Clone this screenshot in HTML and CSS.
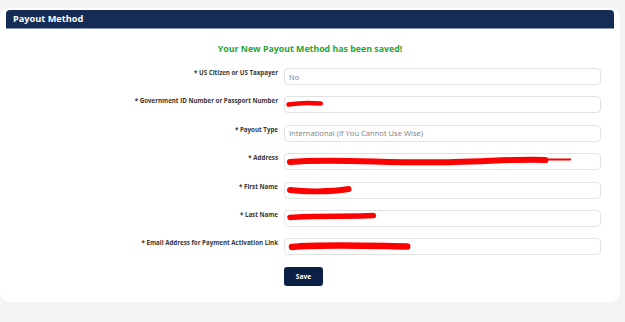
FILE: index.html
```html
<!DOCTYPE html>
<html>
<head>
<meta charset="utf-8">
<link rel="stylesheet" href="styles.css">
</head>
<body>
<div class="card">
  <div class="card-header">Payout Method</div>
  <div class="success">Your New Payout Method has been saved!</div>
  <div class="form">
    <div class="row">
      <div class="label">* US Citizen or US Taxpayer</div>
      <div class="field"><span class="value">No</span></div>
    </div>
    <div class="row">
      <div class="label">* Government ID Number or Passport Number</div>
      <div class="field"><svg class="scribble" width="317" height="15" viewBox="0 0 317 15"><path d="M3.5 7.5 C 12 6, 25 5.5, 36 6.5" stroke="#ff0000" stroke-width="4.5" stroke-linecap="round" fill="none"/></svg></div>
    </div>
    <div class="row">
      <div class="label">* Payout Type</div>
      <div class="field"><span class="value">International (If You Cannot Use Wise)</span></div>
    </div>
    <div class="row">
      <div class="label">* Address</div>
      <div class="field"><svg class="scribble" width="317" height="15" viewBox="0 0 317 15"><path d="M5 8 C 50 4, 110 10, 170 8 S 240 5, 262 6" stroke="#ff0000" stroke-width="6" stroke-linecap="round" fill="none"/><path d="M260 5.5 L 287 5.5" stroke="#ff0000" stroke-width="2" stroke-linecap="round" fill="none"/></svg></div>
    </div>
    <div class="row">
      <div class="label">* First Name</div>
      <div class="field"><svg class="scribble" width="317" height="15" viewBox="0 0 317 15"><path d="M5 7 C 20 9, 45 9, 64 6" stroke="#ff0000" stroke-width="6" stroke-linecap="round" fill="none"/></svg></div>
    </div>
    <div class="row">
      <div class="label">* Last Name</div>
      <div class="field"><svg class="scribble" width="317" height="15" viewBox="0 0 317 15"><path d="M5 6.5 C 30 4, 65 6, 89 4.5" stroke="#ff0000" stroke-width="5.5" stroke-linecap="round" fill="none"/></svg></div>
    </div>
    <div class="row">
      <div class="label">* Email Address for Payment Activation Link</div>
      <div class="field"><svg class="scribble" width="317" height="15" viewBox="0 0 317 15"><path d="M7 8 C 40 5, 90 7, 123 7.5" stroke="#ff0000" stroke-width="6.5" stroke-linecap="round" fill="none"/></svg></div>
    </div>
    <div class="row actions">
      <div class="label"></div>
      <div><button class="save">Save</button></div>
    </div>
  </div>
</div>
</body>
</html>
```

FILE: styles.css
```css
html, body {
  margin: 0;
  padding: 0;
  background: #f4f4f4;
  font-family: "Open Sans", "Noto Sans", sans-serif;
}

.card {
  margin-top: 8px;
  width: 620px;
  height: 294px;
  box-sizing: border-box;
  background: #ffffff;
  border-radius: 10px;
  padding: 2px 6px 0 6px;
}

.card-header {
  height: 19px;
  box-sizing: border-box;
  background: #152c54;
  border-bottom: 1px solid #8c98ae;
  border-radius: 4px 4px 0 0;
  color: #ffffff;
  font-weight: 700;
  font-size: 9.2px;
  line-height: 18px;
  padding-left: 7px;
}

.success {
  text-align: center;
  color: #28a62f;
  font-weight: 700;
  font-size: 8.8px;
  line-height: 14px;
  margin-top: 13px;
}

.form {
  margin-top: 12px;
  display: flex;
  flex-direction: column;
  gap: 11.4px;
}

.row {
  display: grid;
  grid-template-columns: 272px 317px;
  column-gap: 6px;
  align-items: start;
}

.label {
  text-align: right;
  font-size: 6.2px;
  font-weight: 700;
  color: #363636;
  line-height: 8px;
  padding-top: 1px;
  white-space: nowrap;
}

.field {
  height: 17px;
  box-sizing: border-box;
  border: 1px solid #e2e2e2;
  border-radius: 4px;
  background: #ffffff;
  display: flex;
  align-items: center;
  overflow: hidden;
}

.value {
  font-size: 7.6px;
  color: #808080;
  padding-left: 4px;
}

.scribble {
  display: block;
}

.actions {
  margin-top: 0px;
}

.save {
  display: block;
  width: 39px;
  height: 19px;
  border: none;
  border-radius: 3px;
  background: #0c2045;
  color: #ffffff;
  font-family: "Open Sans", "Noto Sans", sans-serif;
  font-weight: 700;
  font-size: 6.6px;
  padding: 0;
  cursor: pointer;
}
```
